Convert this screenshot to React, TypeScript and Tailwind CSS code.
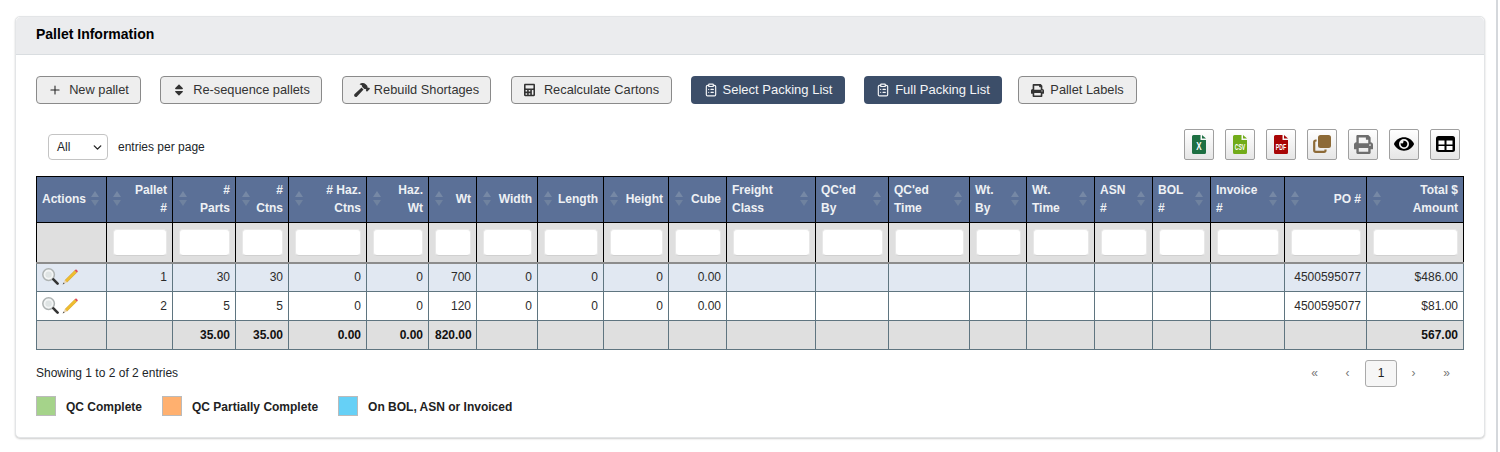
import { ReactNode } from "react";
import { ChevronDown, ClipboardList, Plus } from "lucide-react";
import { FaCalculator, FaEye, FaHammer, FaPrint, FaSort } from "react-icons/fa";

type Col = {
  width: string;
  label: ReactNode;
  left?: boolean;
  r1?: string;
  r2?: string;
  foot?: string;
};

const cols: Col[] = [
  { width: "w-[70px]", label: "Actions", left: true },
  { width: "w-[66px]", label: <>Pallet<br />#</>, r1: "1", r2: "2" },
  { width: "w-[63px]", label: <>#<br />Parts</>, r1: "30", r2: "5", foot: "35.00" },
  { width: "w-[53px]", label: <>#<br />Ctns</>, r1: "30", r2: "5", foot: "35.00" },
  { width: "w-[78px]", label: <># Haz.<br />Ctns</>, r1: "0", r2: "0", foot: "0.00" },
  { width: "w-[62px]", label: <>Haz.<br />Wt</>, r1: "0", r2: "0", foot: "0.00" },
  { width: "w-[48px]", label: "Wt", r1: "700", r2: "120", foot: "820.00" },
  { width: "w-[61px]", label: "Width", r1: "0", r2: "0" },
  { width: "w-[66px]", label: "Length", r1: "0", r2: "0" },
  { width: "w-[65px]", label: "Height", r1: "0", r2: "0" },
  { width: "w-[58px]", label: "Cube", r1: "0.00", r2: "0.00" },
  { width: "w-[89px]", label: <>Freight<br />Class</>, left: true },
  { width: "w-[73px]", label: <>QC'ed<br />By</>, left: true },
  { width: "w-[81px]", label: <>QC'ed<br />Time</>, left: true },
  { width: "w-[57px]", label: <>Wt.<br />By</>, left: true },
  { width: "w-[68px]", label: <>Wt.<br />Time</>, left: true },
  { width: "w-[58px]", label: <>ASN<br />#</>, left: true },
  { width: "w-[58px]", label: <>BOL<br />#</>, left: true },
  { width: "w-[74px]", label: <>Invoice<br />#</>, left: true },
  { width: "w-[82px]", label: "PO #", r1: "4500595077", r2: "4500595077" },
  { width: "w-[97px]", label: <>Total $<br />Amount</>, r1: "$486.00", r2: "$81.00", foot: "567.00" },
];

const buttons = [
  { icon: <Plus className="w-[14px] h-[14px] text-[#222]" strokeWidth={1.8} />, label: "New pallet", w: "w-[105px] mr-[19px]", gap: "gap-[7px]" },
  { icon: <FaSort className="w-[14px] h-[14px]" />, label: "Re-sequence pallets", w: "w-[162px] mr-[20px]", gap: "gap-[7px]" },
  { icon: <FaHammer className="w-[16px] h-[14px]" />, label: "Rebuild Shortages", w: "w-[149px] mr-[20px]", gap: "gap-[4px]" },
  { icon: <FaCalculator className="w-[11px] h-[14px]" />, label: "Recalculate Cartons", w: "w-[161px] mr-[19px]", gap: "gap-[9px]" },
];

function SortArrows() {
  return (
    <svg width="8" height="15" viewBox="0 0 8 15" className="shrink-0">
      <path d="M4 0 L8 6 L0 6 Z" fill="#7688a5" />
      <path d="M4 15 L8 9 L0 9 Z" fill="#6f829f" />
    </svg>
  );
}

function Magnifier() {
  return (
    <svg width="17" height="17" viewBox="0 0 17 17">
      <circle cx="6.6" cy="6.6" r="5.8" fill="#f3f5f5" stroke="#aeb3b3" strokeWidth="1.5" />
      <circle cx="6.6" cy="6.6" r="3.2" fill="#dfe4e4" />
      <path d="M11.4 11.4 L15.6 15.6" stroke="#333" strokeWidth="2.6" strokeLinecap="round" />
    </svg>
  );
}

function Pencil() {
  return (
    <svg width="17" height="17" viewBox="0 0 17 17">
      <path d="M3 12.2 L12.8 2.4 L14.8 4.4 L5 14.2 Z" fill="#f0bd2d" stroke="#c9971f" strokeWidth="0.5" />
      <path d="M12.8 2.4 L14 1.2 L16 3.2 L14.8 4.4 Z" fill="#e0475a" />
      <path d="M3 12.2 L5 14.2 L0.6 16.4 Z" fill="#e9d3ad" />
      <path d="M1.6 14.4 L2.6 15.4 L0.6 16.4 Z" fill="#444" />
    </svg>
  );
}

// file shape with folded corner and a real text label, squeezed to fit the page
function FileIcon({ color, label, size, sx }: { color: string; label: string; size: number; sx: number }) {
  return (
    <svg width="14" height="19" viewBox="0 0 14 19">
      <path d="M1.5 0 H8.5 V5 H14 V17.5 Q14 19 12.5 19 H1.5 Q0 19 0 17.5 V1.5 Q0 0 1.5 0 Z" fill={color} />
      <path d="M10 0 L14 3.6 H10 Z" fill={color} />
      <text transform={`translate(7 14.8) scale(${sx} 1.3)`} textAnchor="middle" fill="#fff" fontSize={size} fontWeight="700" fontFamily="'Liberation Sans', Arial, sans-serif">
        {label}
      </text>
    </svg>
  );
}

function CopyIcon() {
  return (
    <svg width="18" height="18" viewBox="0 0 18 18">
      <rect x="5" y="0" width="13" height="13" rx="2.5" fill="#8d6a37" />
      <path d="M3.6 5.5 H2.8 Q1.2 5.5 1.2 7 V15.2 Q1.2 16.8 2.8 16.8 H11 Q12.5 16.8 12.5 15.2 V14.6" fill="none" stroke="#8d6a37" strokeWidth="2.2" />
    </svg>
  );
}

function TableIcon() {
  return (
    <svg width="19" height="16" viewBox="0 0 19 16">
      <rect x="0" y="0" width="19" height="16" rx="2.5" fill="#000" />
      <rect x="2.5" y="4.5" width="6" height="4" fill="#fff" />
      <rect x="10.5" y="4.5" width="6" height="4" fill="#fff" />
      <rect x="2.5" y="10" width="6" height="4" fill="#fff" />
      <rect x="10.5" y="10" width="6" height="4" fill="#fff" />
    </svg>
  );
}

export default function App() {
  return (
    <div className="w-[1500px] h-[452px] bg-white flex font-['Liberation_Sans',Arial,sans-serif] text-[#212529] overflow-hidden">
      <div className="pt-[16px] pl-[15px]">
        <div className="w-[1470px] h-[422px] rounded-[5px] border border-[#e3e5e7] shadow-[0_1px_2px_rgba(0,0,0,0.2)] bg-white">
          {/* Panel header */}
          <div className="h-[38px] bg-[#ebecee] border-b border-[#d9dde0] rounded-t-[5px] pl-[20px] pb-[2px] flex items-center">
            <h3 className="text-[14px] font-bold text-black">Pallet Information</h3>
          </div>

          <div className="px-[20px]">
            {/* Toolbar */}
            <div className="flex items-center mt-[21px] h-[28px]">
              {buttons.map((b) => (
                <button key={b.label} className={`${b.w} ${b.gap} h-[28px] flex items-center justify-center rounded-[4px] border border-[#8a8a8a] bg-[#eeeeee] text-[#333] text-[12.8px]`}>
                  {b.icon}
                  {b.label}
                </button>
              ))}
              <button className="w-[154px] h-[28px] mr-[19px] flex items-center justify-center gap-[5px] rounded-[4px] bg-[#3c4e69] text-[#f4f5f7] text-[13px]">
                <ClipboardList className="w-[14px] h-[14px]" strokeWidth={2} />
                Select Packing List
              </button>
              <button className="w-[138px] h-[28px] mr-[16px] flex items-center justify-center gap-[5px] rounded-[4px] bg-[#3c4e69] text-[#f4f5f7] text-[13px]">
                <ClipboardList className="w-[14px] h-[14px]" strokeWidth={2} />
                Full Packing List
              </button>
              <button className="w-[119px] h-[28px] flex items-center justify-center gap-[6px] rounded-[4px] border border-[#8a8a8a] bg-[#eeeeee] text-[#333] text-[12.8px]">
                <FaPrint className="w-[13px] h-[13px]" />
                Pallet Labels
              </button>
            </div>

            {/* Page size + export */}
            <div className="flex items-center justify-between mt-[24px] h-[32px]">
              <div className="flex items-center ml-[12px] mt-[5px]">
                <div className="relative w-[60px] h-[26px] rounded-[4px] border border-[#c4c4c4] bg-white flex items-center pl-[8px] text-[12px]">
                  All
                  <ChevronDown className="absolute right-[3px] top-[6px] w-[13px] h-[13px] text-[#222]" strokeWidth={2.5} />
                </div>
                <span className="ml-[10px] text-[12px]">entries per page</span>
              </div>
              <div className="flex items-center gap-[11px] mr-[4px]">
                <ExportButton><FileIcon color="#1d6f42" label="X" size={8} sx={1} /></ExportButton>
                <ExportButton><FileIcon color="#71ab19" label="CSV" size={6.5} sx={0.8} /></ExportButton>
                <ExportButton><FileIcon color="#a80505" label="PDF" size={6.5} sx={0.8} /></ExportButton>
                <ExportButton><CopyIcon /></ExportButton>
                <ExportButton><FaPrint className="w-[19px] h-[19px] text-[#6e6e6e]" /></ExportButton>
                <ExportButton><FaEye className="w-[20px] h-[18px] text-black" /></ExportButton>
                <ExportButton><TableIcon /></ExportButton>
              </div>
            </div>

            {/* Table */}
            <table className="mt-[16px] w-[1427px] table-fixed border-collapse text-[12px]">
              <colgroup>
                {cols.map((c, i) => (
                  <col key={i} className={c.width} />
                ))}
              </colgroup>
              <thead>
                <tr className="h-[46px] bg-[#5b7097]">
                  {cols.map((c, i) => (
                    <th key={i} className="border border-black pl-[6px] pr-[5px] pb-[2px] font-bold text-[#eef0f4] leading-[18px]">
                      {c.left ? (
                        <div className="flex items-center justify-between text-left -ml-[1px] pr-[2px]">
                          <span>{c.label}</span>
                          <SortArrows />
                        </div>
                      ) : (
                        <div className="flex items-center justify-between text-right">
                          <SortArrows />
                          <span>{c.label}</span>
                        </div>
                      )}
                    </th>
                  ))}
                </tr>
                <tr className="h-[40px] bg-[#dfdfdf]">
                  {cols.map((c, i) => (
                    <th key={i} className="border-x border-x-black border-b-2 border-b-[#8c8c8c] pl-[6px] pr-[5px]">
                      {i > 0 && <input className="block w-full h-[27px] rounded-[4px] bg-white border border-[#e8e8e8] border-b-[#d0d0d0] outline-none" />}
                    </th>
                  ))}
                </tr>
              </thead>
              <tbody>
                {[0, 1].map((row) => (
                  <tr key={row} className={row === 0 ? "h-[29px] bg-[#e1e8f2]" : "h-[29px] bg-white"}>
                    {cols.map((c, i) => (
                      <td key={i} className="border border-[#5f7580] pl-[6px] pr-[5px] text-right text-[#2b2b2b]">
                        {i === 0 ? (
                          <div className="flex items-center -ml-[1px] gap-[3px] -mt-[1px]">
                            <Magnifier />
                            <Pencil />
                          </div>
                        ) : row === 0 ? c.r1 : c.r2}
                      </td>
                    ))}
                  </tr>
                ))}
              </tbody>
              <tfoot>
                <tr className="h-[29px] bg-[#dfdfdf]">
                  {cols.map((c, i) => (
                    <td key={i} className="border border-[#5f7580] pl-[6px] pr-[5px] text-right font-bold text-[#111]">
                      {c.foot}
                    </td>
                  ))}
                </tr>
              </tfoot>
            </table>

            {/* Info + pagination */}
            <div className="flex items-center justify-between mt-[9px] h-[28px] w-[1428px]">
              <span className="text-[12px]">Showing 1 to 2 of 2 entries</span>
              <div className="flex items-center text-[#777] text-[12px] mr-[1px]">
                <span className="w-[33px] text-center -translate-x-[1px]">«</span>
                <span className="w-[33px] text-center -translate-x-[1px]">‹</span>
                <span className="w-[32px] h-[27px] flex items-center justify-center rounded-[3px] border border-[#aaa] bg-[#f6f6f6] text-[#222]">1</span>
                <span className="w-[33px] text-center">›</span>
                <span className="w-[33px] text-center">»</span>
              </div>
            </div>

            {/* Legend */}
            <div className="flex items-center mt-[9px] text-[12px] font-bold text-[#222]">
              <LegendSwatch color="bg-[#a5d38a]" />
              <span className="ml-[10px] mr-[20px] mt-[2px]">QC Complete</span>
              <LegendSwatch color="bg-[#ffb06f]" />
              <span className="ml-[10px] mr-[20px] mt-[2px]">QC Partially Complete</span>
              <LegendSwatch color="bg-[#66d0f6]" />
              <span className="ml-[10px] mt-[2px]">On BOL, ASN or Invoiced</span>
            </div>
          </div>
        </div>
      </div>
      <div className="ml-[11px] w-[2px] h-full bg-[#d5d8dc]" />
    </div>
  );
}

function ExportButton({ children }: { children: ReactNode }) {
  return (
    <button className="w-[30px] h-[31px] flex items-center justify-center rounded-[2px] border border-[#a0a0a0] bg-gradient-to-b from-white to-[#e6e6e6]">
      {children}
    </button>
  );
}

function LegendSwatch({ color }: { color: string }) {
  return <div className={`w-[20px] h-[20px] border border-[#bbb] ${color}`} />;
}
